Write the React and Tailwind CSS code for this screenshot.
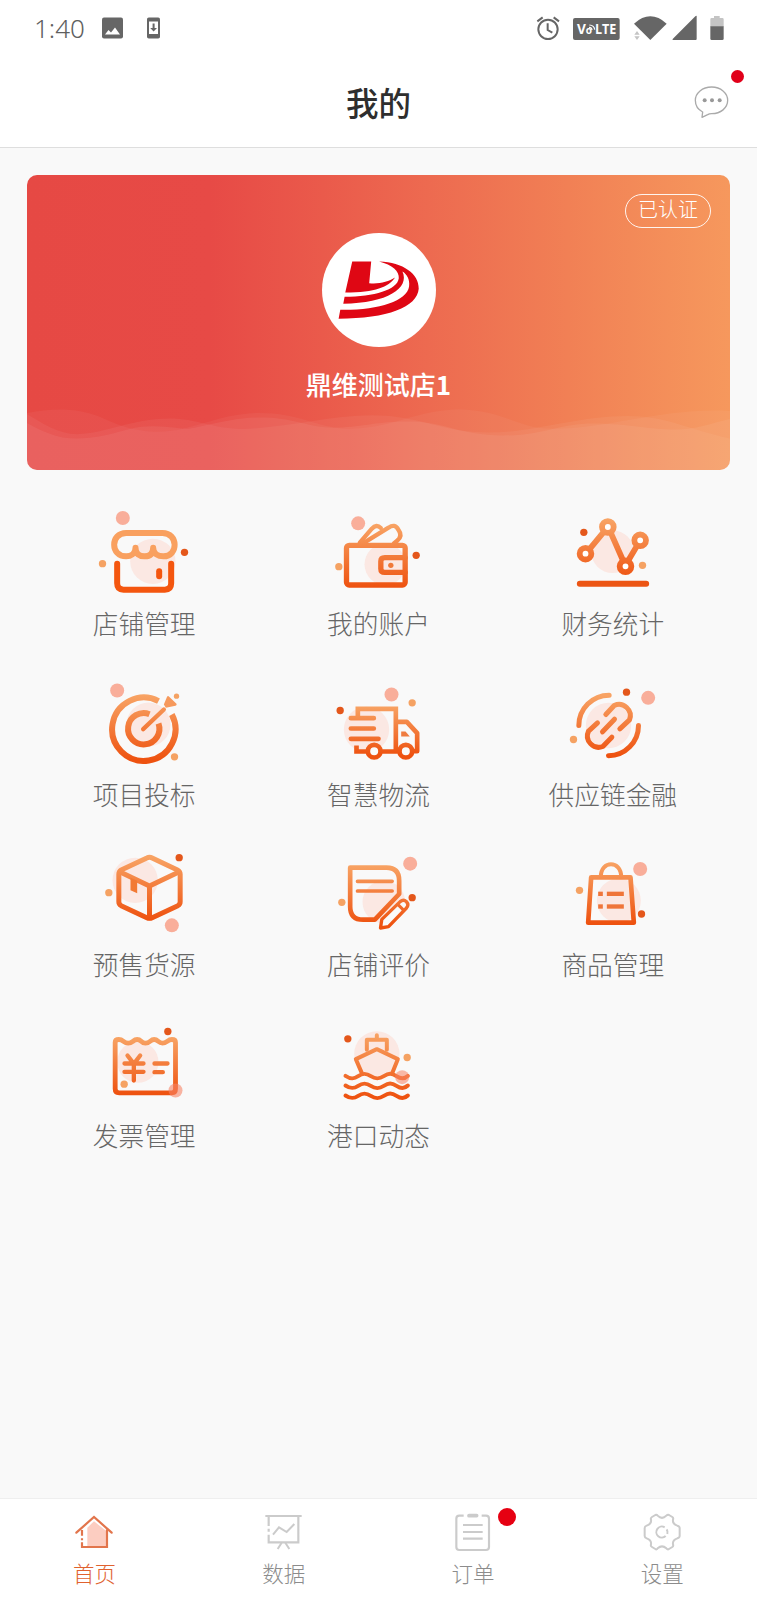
import React from "react";

const PALE = "#fbe8e3";
const PINK = "#f9ae9a";
const LIGHT = "#f5a263";
const DARK = "#e4571b";

function Dot({ x, y, r = 10.5, c }) {
  return <circle cx={x} cy={y} r={r} fill={c} stroke="none" />;
}

function Icon({ id, x, y, y1, y2, w = 14, pale, children, dots }) {
  return (
    <svg className="block h-[96px] w-[140px] shrink-0" viewBox={`${x} ${y} 420 288`} fill="none">
      <defs>
        <linearGradient id={id} gradientUnits="userSpaceOnUse" x1="0" x2="0" y1={y1} y2={y2}>
          <stop offset="0" stopColor="#f8a364" />
          <stop offset="1" stopColor="#ee5210" />
        </linearGradient>
      </defs>
      <Dot x={pale[0]} y={pale[1]} r={pale[2]} c={PALE} />
      <g stroke={`url(#${id})`} strokeWidth={w} strokeLinecap="round" strokeLinejoin="round">
        {children}
      </g>
      {dots.map((d, i) => (
        <circle key={i} cx={d[0]} cy={d[1]} r={d[2] === PINK ? 21 : 11} fill={d[2]} />
      ))}
    </svg>
  );
}

const C1 = -18.5;
const C2 = -5.5;
const C3 = 8.5;

const items = [
  {
    label: "店铺管理",
    icon: (
      <Icon id="shop" x={C1} y={12} y1={90} y2={270} w={18} pale={[218, 184, 68]}
        dots={[[128, 54, PINK], [313, 157, DARK], [67, 191, LIGHT]]}>
        <g stroke="#f9a05f">
          <path d="M138 99H247C295 99 295 169 250 169C234 169 219 162 219 143C219 162 208 169 193 169C178 169 166 162 166 143C166 162 150 169 138 169C90 169 90 99 138 99Z" />
        </g>
        <g stroke="#f4560f">
          <path d="M111 191V250Q111 269 130 269H254Q273 269 273 250V191" />
          <path d="M237 214V229" />
        </g>
      </Icon>
    ),
  },
  {
    label: "我的账户",
    icon: (
      <Icon id="wallet" x={C2} y={12} y1={75} y2={262} w={16} pale={[226, 193, 62]}
        dots={[[145, 70, PINK], [319, 166, DARK], [87, 200, LIGHT]]}>
        <rect x="110" y="136" width="176" height="119" rx="8" />
        <path strokeWidth="13" d="M150 128L186 86Q200 71 213 84" />
        <path strokeWidth="13" d="M163 128L236 83Q255 70 265 88Q280 108 262 122L252 130" />
        <path d="M286 173H225Q213 173 213 184V206Q213 217 225 217H286" />
        <Dot x={243} y={196} r={8} c="#f07a3a" />
      </Icon>
    ),
  },
  {
    label: "财务统计",
    icon: (
      <Icon id="stats" x={C3} y={12} y1={60} y2={240} w={17.5} pale={[217, 155, 64]}
        dots={[[131, 97, DARK], [307, 196, LIGHT]]}>
        <path d="M150 145L189 98M213 101L248 180M267 177L288 142" />
        <g fill="#fff">
          <circle cx="203" cy="81" r="17.5" />
          <circle cx="136" cy="161" r="17.5" />
          <circle cx="256" cy="199" r="17.5" />
          <circle cx="300" cy="121" r="17.5" />
        </g>
        <path d="M119 251L318 251.1" stroke="#ec5514" strokeWidth="18" />
      </Icon>
    ),
  },
  {
    label: "项目投标",
    icon: (
      <Icon id="target" x={C1} y={523.5} y1={585} y2={780} w={18} pale={[205, 672, 66]}
        dots={[[111, 570, PINK], [283, 769, LIGHT]]}>
        <g strokeLinecap="butt">
          <path d="M235 602A95 95 0 1 0 275 642" />
          <path strokeWidth="18" d="M208 641A47 47 0 1 0 235 669" />
        </g>
        <path strokeWidth="13" d="M189 686L251 627" />
        <path d="M261 588Q264 585 267 589L289 610Q291 614 286 616L257 622L251 612Z" fill="#f6995c" stroke="none" />
        <Dot x={289} y={587} r={8} c={LIGHT} />
      </Icon>
    ),
  },
  {
    label: "智慧物流",
    icon: (
      <Icon id="truck" x={C2} y={523.5} y1={615} y2={765} w={14} pale={[170, 687, 68]}
        dots={[[245, 582, PINK], [307, 607, LIGHT], [91, 630, DARK]]}>
        <g strokeLinejoin="miter" strokeLinecap="butt">
          <path d="M144 652V625H258V752" />
          <path strokeLinejoin="round" d="M258 664H291L322 698V752H308" />
          <path d="M140 735V753H172M214 753H268" />
        </g>
        <path d="M123 653L192 653.1M123 684L192 684.1M123 715L206 715.1" />
        <circle cx="193" cy="752" r="19" fill="#fafafa" />
        <circle cx="288" cy="752" r="19" fill="#fafafa" />
        <path d="M274 693H287L300 708H274Z" fill="#ef7c40" stroke="none" />
      </Icon>
    ),
  },
  {
    label: "供应链金融",
    icon: (
      <Icon id="chain" x={C3} y={523.5} y1={585} y2={765} w={15} pale={[205, 675, 68]}
        dots={[[259, 575, DARK], [324, 592, PINK], [100, 717, LIGHT]]}>
        <path d="M116 675A91 91 0 0 1 207 584" />
        <path d="M295 675A91 91 0 0 1 205 766" />
        <path d="M197 642L222 615A34 34 0 0 1 268 658L239 685" />
        <path d="M172 667L145 692A34 34 0 0 0 188 738L215 710" />
        <path d="M187 694L223 656" />
      </Icon>
    ),
  },
  {
    label: "预售货源",
    icon: (
      <Icon id="box" x={C1} y={15} y1={50} y2={240} w={15} pale={[165, 121, 68]}
        dots={[[297, 53, DARK], [86, 158, LIGHT], [275, 256, PINK]]}>
        <path d="M200 54Q208 50 216 54L292 90Q300 94 300 103V185Q300 193 293 197L216 233Q208 237 200 233L123 197Q116 193 116 185V103Q116 94 123 90Z" />
        <path d="M120 96L208 138L296 96M208 138V233" />
        <path d="M151 113L171 122V160L151 151Z" fill="#f27a34" stroke="none" />
      </Icon>
    ),
  },
  {
    label: "店铺评价",
    icon: (
      <Icon id="review" x={C2} y={15} y1={75} y2={255} w={14} pale={[222, 186, 64]}
        dots={[[301, 71, PINK], [96, 187, LIGHT], [307, 173, DARK]]}>
        <path d="M121 83H230Q268 83 268 122V162L195 239H160Q121 239 121 200Z" />
        <path strokeWidth="11" d="M143 124L247 124.1M143 153L247 153.1" />
        <path strokeWidth="10" fill="#fafafa" d="M216 238L271 185Q281 177 290 185Q298 194 290 204L236 260L212 264Z" />
        <path strokeWidth="9" d="M264 193L282 211" />
      </Icon>
    ),
  },
  {
    label: "商品管理",
    icon: (
      <Icon id="goods" x={C3} y={15} y1={65} y2={250} w={14} pale={[236, 182, 66]}
        dots={[[300, 87, PINK], [118, 151, LIGHT], [304, 222, DARK]]}>
        <path d="M153 112H271L281 248H144Z" />
        <path strokeWidth="12" d="M182 110C182 60 243 60 243 110" />
        <g stroke="none" fill="#ef7539">
          <rect x="174" y="155" width="14" height="13" />
          <rect x="200" y="155" width="51" height="13" />
          <rect x="174" y="193" width="14" height="13" />
          <rect x="200" y="193" width="51" height="13" />
        </g>
      </Icon>
    ),
  },
  {
    label: "发票管理",
    icon: (
      <Icon id="invoice" x={C1} y={526.5} y1={590} y2={760} w={14.5} pale={[173, 665, 62]}
        dots={[[263, 573, DARK], [132, 731, LIGHT]]}>
        <path d="M105 606Q105 597 116 597C130 597 130 608 144 608S158 597 171 597S182 608 196 608S210 597 222 597S234 608 247 608S262 597 275 597Q286 597 286 606V745Q286 757 275 757H117Q105 757 105 745Z" />
        <path strokeWidth="13" d="M142 645L161 670L180 645M133 669L190 669.1M133 694L190 694.1M161 672V720" />
        <path strokeWidth="13" d="M223 669L262 669.1M223 695L248 695.1" />
        <circle cx="286" cy="750" r="21" fill="#f78465" fillOpacity=".6" stroke="none" />
      </Icon>
    ),
  },
  {
    label: "港口动态",
    icon: (
      <Icon id="port" x={C2} y={526.5} y1={580} y2={770} w={12} pale={[201, 640, 68]}
        dots={[[114, 595, DARK], [292, 651, LIGHT]]}>
        <path d="M201 584V596M171 628V598H231V628" />
        <path d="M157 700L138 656L201 626L264 656L247 698" />
        <path d="M107 706C122 716 132 716 145 707S168 697 183 707S208 716 222 707S245 697 260 707S285 715 294 706" />
        <path d="M107 735C122 745 132 745 145 736S168 726 183 736S208 745 222 736S245 726 260 736S285 744 294 735" />
        <path d="M107 765C122 775 132 775 145 766S168 756 183 766S208 775 222 766S245 756 260 766S285 774 294 765" />
        <circle cx="277" cy="710" r="21" fill="#f78465" fillOpacity=".55" stroke="none" />
      </Icon>
    ),
  },
];

const tabs = [
  {
    label: "首页",
    active: true,
    icon: (
      <svg className="h-[44px] w-[44px]" viewBox="219 90 132 132" fill="none" stroke="#e2754c" strokeWidth="6.5">
        <path d="M262 143L282 124L319 153V199H262Z" fill="#fccdc1" stroke="none" />
        <path strokeLinecap="round" d="M229 158L282 111L335 158" />
        <path d="M321 148V201H246V187M246 150V167M246 175V181" />
      </svg>
    ),
  },
  {
    label: "数据",
    icon: (
      <svg className="h-[44px] w-[44px]" viewBox="786 90 132 132" fill="none" stroke="#cbcbcb" strokeWidth="6.5">
        <path d="M796 108H905M895 108V187H806V164M806 108V138M806 146V155" />
        <path strokeWidth="6" d="M819 164L837 142L860 156L883 132M845 188L833 207M856 188L868 207" />
      </svg>
    ),
  },
  {
    label: "订单",
    badge: true,
    icon: (
      <svg className="h-[44px] w-[44px]" viewBox="213 90 132 132" fill="none" stroke="#cbcbcb" strokeWidth="6.5">
        <path d="M251 107H238Q229 107 229 116V201Q229 210 238 210H318Q327 210 327 201V116Q327 107 318 107H305" />
        <path strokeWidth="11" strokeLinecap="round" d="M267 107L290 107.1" />
        <path d="M249 135H308M249 156H308M249 176H308" />
      </svg>
    ),
  },
  {
    label: "设置",
    icon: (
      <svg className="h-[44px] w-[44px]" viewBox="781 90 132 132" fill="none" stroke="#cbcbcb" strokeWidth="6" strokeLinejoin="round">
        <path d="M827 105Q831 103 834 107Q847 120 860 107Q864 103 868 105L878 111Q882 114 880 119Q878 132 893 137Q900 139 900 144V168Q900 173 893 175Q878 180 880 193Q882 198 878 201L868 207Q864 210 860 205Q847 193 834 205Q831 210 827 207L817 201Q812 198 814 193Q816 180 801 175Q795 173 795 168V144Q795 139 801 137Q816 132 814 119Q812 114 817 111Z" />
        <path d="M855 142A16.5 16.5 0 1 0 858 168M863 162A16.5 16.5 0 0 0 861 148" />
      </svg>
    ),
  },
];

function StatusBar() {
  return (
    <div className="flex h-[56px] items-center pl-[34px]">
      <span className="w-[68px] text-[26px] font-light leading-none text-[#5f5f5f] [font-family:'Noto_Sans','Open_Sans',sans-serif]">
        1:40
      </span>
      <svg className="h-[22px] w-[21px]" viewBox="0 0 21 22">
        <rect x="0" y=".5" width="21" height="21" rx="2" fill="#666" />
        <path d="M3 17.5L6.5 13L9 15.5L13 10.5L18 17.5Z" fill="#fff" />
      </svg>
      <svg className="ml-[23px] h-[22px] w-[15px]" viewBox="0 0 15 22">
        <rect x="1" y=".5" width="13" height="21" rx="1.8" fill="#666" />
        <path d="M3 4.5H12V17H3Z" fill="#fff" />
        <path d="M6.6 6.5H8.6V11H11L7.6 14.6L4.2 11H6.6Z" fill="#666" />
      </svg>
      <svg className="ml-[375px] h-[26px] w-[24px] shrink-0" viewBox="107 45 72 78" fill="none" stroke="#666" strokeWidth="6">
        <circle cx="143" cy="88" r="29" />
        <path d="M142 70V90L156 98M111 64L127 52M176 64L160 52" />
      </svg>
      <svg className="ml-[13px] h-[26px] w-[47px] shrink-0" viewBox="218 45 141 78">
        <rect x="218" y="54" width="140" height="66" rx="6" fill="#666" />
        <g fill="#fff" fontFamily="'Open Sans','Noto Sans',sans-serif" fontWeight="700">
          <text x="230" y="103" fontSize="41" textLength="27">V</text>
          <text x="284" y="103" fontSize="41" textLength="64" lengthAdjust="spacingAndGlyphs">LTE</text>
          <text x="256" y="103" fontSize="30" textLength="17">o</text>
        </g>
        <path d="M266 82Q274 82 275 90M267 75Q282 76 283 89" fill="none" stroke="#fff" strokeWidth="3.5" />
      </svg>
      <svg className="ml-[14px] h-[26px] w-[33px] shrink-0" viewBox="400 45 99 78">
        <path d="M400 71Q449 27 498 71L449 120Z" fill="#666" />
        <path d="M400 106L409 90L425 108L414 120L400 120Z" fill="#fff" />
        <path d="M401 104L409 93L417 104ZM401 109L409 120L417 109Z" fill="#c4c4c4" />
      </svg>
      <svg className="ml-[5px] h-[26px] w-[25px] shrink-0" viewBox="513 45 75 78">
        <path d="M587 48V117Q587 120 584 120H516Q513 119 515 117L583 49Q586 46 587 48Z" fill="#666" />
      </svg>
      <svg className="ml-[13px] h-[26px] w-[14px] shrink-0" viewBox="629 45 42 78">
        <path d="M630 80V58Q630 54 634 54H641V48H658V54H666Q670 54 670 58V80Z" fill="#c4c4c4" />
        <path d="M630 79H670V116Q670 120 666 120H634Q630 120 630 116Z" fill="#666" />
      </svg>
    </div>
  );
}

function ProfileCard() {
  return (
    <section className="relative mx-[27px] mt-[27px] h-[295px] shrink-0 overflow-hidden rounded-[10px] bg-[linear-gradient(90deg,#e64944_0%,#e74a46_26%,#ea5a4b_42%,#ed6a50_57%,#f18055_77%,#f6985d_100%)]">
      <svg className="absolute bottom-0 left-0 h-[63px] w-full" viewBox="56 740 1456 190" preserveAspectRatio="none" fill="#fff">
        <path fillOpacity=".045" d="M56 758C110 742 160 744 200 766C240 790 270 815 330 815C400 812 450 762 530 758C620 756 650 800 720 806C810 806 860 750 950 747C1040 750 1070 800 1130 805C1250 812 1370 740 1512 752V930H56Z" />
        <path fillOpacity=".05" d="M56 762C90 790 120 822 160 822C220 820 270 776 350 775C410 775 440 806 500 806C590 804 680 766 770 765C850 765 900 800 960 812C1080 836 1170 768 1300 767C1380 768 1410 800 1512 835V930H56Z" />
        <path fillOpacity=".06" d="M56 788C90 815 120 836 160 835C240 832 260 795 320 798C370 800 380 812 410 800C470 782 500 770 550 772C620 776 640 805 700 802C760 798 790 780 860 784C930 790 950 824 1040 826C1130 826 1160 786 1240 790C1320 794 1340 808 1400 808C1440 808 1470 790 1512 776V930H56Z" />
      </svg>
      <div className="relative flex h-full flex-col items-center">
        <span className="absolute right-[19px] top-[19px] flex h-[34px] w-[86px] justify-center rounded-full border-[1.5px] border-white/90 text-[20px] font-light leading-[28px] text-white">
          已认证
        </span>
        <div className="mt-[58px] h-[114px] w-[114px] rounded-full bg-white">
          <svg className="h-full w-full" viewBox="63 39 343 343" fill="#df0714">
            <path d="M154 125H211L205 190C235 193 262 186 283 173C262 202 225 218 133 218Z" />
            <path d="M235 125C308 128 355 162 354 207C350 262 260 297 113 297L118 270C230 272 318 245 325 200C328 178 318 163 305 155C328 205 260 250 127 252L131 231C220 230 290 210 294 175C296 155 275 135 235 125Z" />
          </svg>
        </div>
        <h2 className="mt-[18px] text-[26px] font-medium leading-[38px] text-white">
          鼎维测试店<span className="font-bold">1</span>
        </h2>
      </div>
    </section>
  );
}

export default function App() {
  return (
    <div className="flex h-[1600px] w-[757px] flex-col overflow-hidden bg-[#f9f9f9] [font-family:'Noto_Sans_CJK_SC',sans-serif]">
      <header className="h-[148px] shrink-0 border-b border-[#dedede] bg-white">
        <StatusBar />
        <div className="relative flex h-[91px] items-center justify-center">
          <h1 className="text-[32.5px] font-medium leading-[44px] text-[#2e2e2e]">我的</h1>
          <svg className="absolute left-[694px] top-[29px] h-[34px] w-[36px]" viewBox="582 255 108 102" fill="none" stroke="#aaa" strokeWidth="4">
            <path d="M606 352L608 336C592 328 586 314 586 301C586 279 607 261 635 261C662 261 683 279 683 301C683 324 662 341 635 341C630 341 626 342 623 344Z" strokeLinejoin="round" />
            <g fill="#999" stroke="none">
              <circle cx="614" cy="301" r="6" />
              <circle cx="636" cy="301" r="6" />
              <circle cx="659" cy="301" r="6" />
            </g>
          </svg>
          <span className="absolute left-[730.5px] top-[14px] h-[13px] w-[13px] rounded-full bg-[#e1001a]" />
        </div>
      </header>

      <ProfileCard />

      <main className="mx-[27px] mt-[34px] grid auto-rows-[170.5px] grid-cols-3">
        {items.map((it) => (
          <button key={it.label} className="flex flex-col items-center">
            {it.icon}
            <span className="mt-[4px] whitespace-nowrap text-[25.7px] font-light leading-[38px] text-[#666]">{it.label}</span>
          </button>
        ))}
      </main>

      <nav className="mt-auto grid h-[102px] shrink-0 grid-cols-4 border-t border-[#efefef] bg-white">
        {tabs.map((t) => (
          <button key={t.label} className="relative flex flex-col items-center pt-[11px]">
            {t.icon}
            {t.badge && <span className="absolute left-[119px] top-[9px] h-[18px] w-[18px] rounded-full bg-[#e60012]" />}
            <span className={t.active ? "mt-[4px] text-[21.5px] font-light leading-[30px] text-[#e0622f]" : "mt-[4px] text-[21.5px] font-light leading-[30px] text-[#8c8c8c]"}>
              {t.label}
            </span>
          </button>
        ))}
      </nav>
    </div>
  );
}
